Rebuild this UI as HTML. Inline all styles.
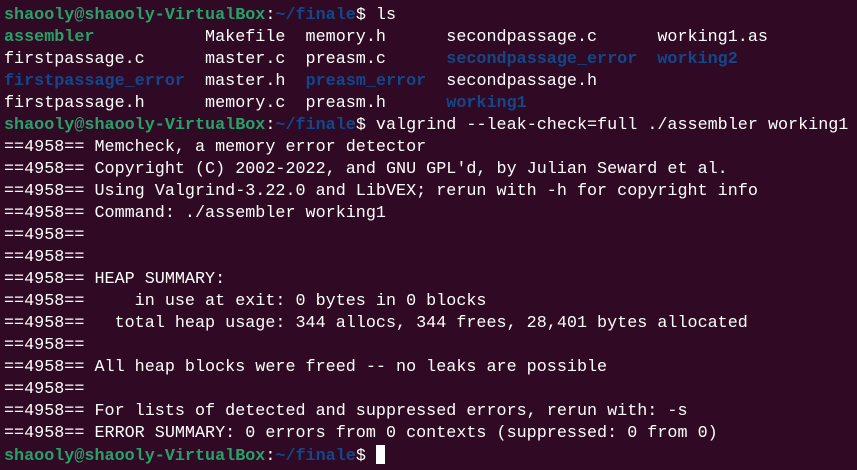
<!DOCTYPE html>
<html><head><meta charset="utf-8"><style>
html,body{margin:0;padding:0;background:#300a24;width:857px;height:470px;overflow:hidden}
pre{margin:0;position:absolute;left:4px;top:5px;font-family:"Liberation Mono",monospace;font-size:16.75px;line-height:22px;color:#ffffff;white-space:pre}
.g{color:#26a269;font-weight:bold}
.b{color:#12488b;font-weight:bold}
.c{display:inline-block;width:9px;height:19px;background:#fff;vertical-align:-4px}
</style></head><body><pre><span class="g">shaooly@shaooly-VirtualBox</span>:<span class="b">~/finale</span>$ ls
<span class="g">assembler</span>           Makefile  memory.h      secondpassage.c      working1.as
firstpassage.c      master.c  preasm.c      <span class="b">secondpassage_error</span>  <span class="b">working2</span>
<span class="b">firstpassage_error</span>  master.h  <span class="b">preasm_error</span>  secondpassage.h
firstpassage.h      memory.c  preasm.h      <span class="b">working1</span>
<span class="g">shaooly@shaooly-VirtualBox</span>:<span class="b">~/finale</span>$ valgrind --leak-check=full ./assembler working1
==4958== Memcheck, a memory error detector
==4958== Copyright (C) 2002-2022, and GNU GPL'd, by Julian Seward et al.
==4958== Using Valgrind-3.22.0 and LibVEX; rerun with -h for copyright info
==4958== Command: ./assembler working1
==4958==
==4958==
==4958== HEAP SUMMARY:
==4958==     in use at exit: 0 bytes in 0 blocks
==4958==   total heap usage: 344 allocs, 344 frees, 28,401 bytes allocated
==4958==
==4958== All heap blocks were freed -- no leaks are possible
==4958==
==4958== For lists of detected and suppressed errors, rerun with: -s
==4958== ERROR SUMMARY: 0 errors from 0 contexts (suppressed: 0 from 0)
<span class="g">shaooly@shaooly-VirtualBox</span>:<span class="b">~/finale</span>$ <span class="c"></span></pre></body></html>
